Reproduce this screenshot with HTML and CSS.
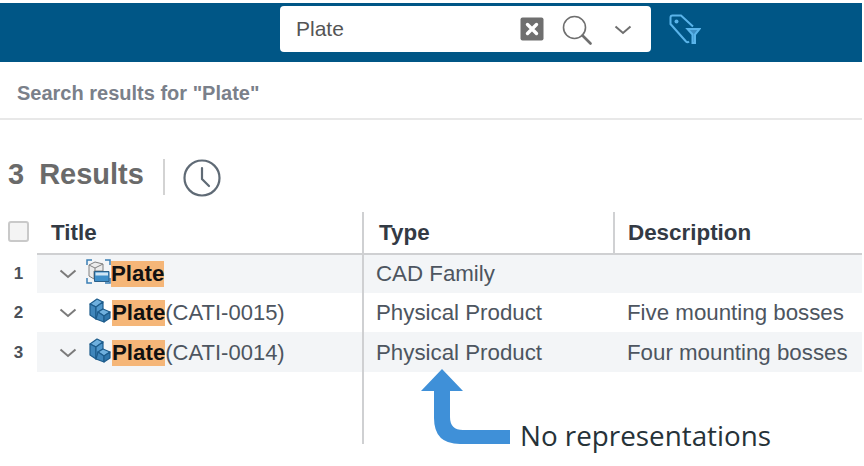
FILE: index.html
```html
<!DOCTYPE html>
<html lang="en">
<head>
<meta charset="utf-8">
<title>Search results</title>
<link rel="stylesheet" href="styles.css">
</head>
<body>
<div class="page">
  <header class="topbar">
    <div class="search">
      <span class="search-text">Plate</span>
      <svg class="ico-clear" width="24" height="24" viewBox="0 0 24 24"><rect x="0.5" y="0.5" width="23" height="23" rx="2" fill="#6f6f6f"/><path d="M7.500 7.500l9 9M16.500 7.500l-9 9" stroke="#fff" stroke-width="3.400" stroke-linecap="round"/></svg>
      <svg class="ico-search" width="30" height="30" viewBox="0 0 30 30" fill="none" stroke="#6f6f6f"><circle cx="12.500" cy="12.500" r="11" stroke-width="1.600"/><path d="M20.500 20.500l8 8" stroke-width="2.600" stroke-linecap="round"/></svg>
      <svg class="ico-caret" width="18" height="10" viewBox="0 0 18 10" fill="none" stroke="#6f6f6f" stroke-width="2"><path d="M1.500 1.500L9 8l7.500-6.500"/></svg>
    </div>
    <svg class="ico-tag" width="32" height="31" viewBox="0 0 32 31" fill="none" stroke="#5ab4ea" stroke-width="2"><path d="M24 12.500L12 1.500H3.500Q1.500 1.500 1.500 3.500V10L17 27.500Q18.500 29 20 27.500"/><circle cx="7.500" cy="7.500" r="2" fill="#5ab4ea" stroke="none"/><path d="M18.500 15H30.500L26 20.500V29H23.500V20.500Z" fill="#3e8fc4"/></svg>
  </header>
  <div class="subhead">Search results for "Plate"</div>
  <div class="summary">
    <span class="count">3</span>
    <span class="results">Results</span>
    <span class="sep"></span>
    <svg class="ico-clock" width="38" height="38" viewBox="0 0 38 38" fill="none" stroke="#5f6a75" stroke-width="2.200"><circle cx="19" cy="19" r="17.500"/><path d="M19 9v11l7 7" stroke-linecap="round"/></svg>
  </div>
  <div class="table">
    <div class="head">
      <div class="c-num"><span class="checkbox"></span></div>
      <div class="c-title">Title</div>
      <div class="c-type">Type</div>
      <div class="c-desc">Description</div>
    </div>
    <div class="row shade">
      <div class="c-num">1</div>
      <div class="c-title">
        <svg class="chev" width="18" height="10" viewBox="0 0 18 10" fill="none" stroke="#7b7b7b" stroke-width="2"><path d="M1.500 1.500L9 8l7.500-6.500"/></svg>
        <svg class="ico-fam" width="25" height="25" viewBox="0 0 25 25" fill="none"><path d="M1 6V1h5M19 1h5v5M24 19v5h-5M6 24H1v-5" stroke="#3b7fb5" stroke-width="1.500"/><path d="M3 6l6-3 8 2v7H8v8l-5-3z" fill="#ececec" stroke="#808080"/><path d="M3 6l6 3 8-4M9 9v3" stroke="#808080"/><path d="M8.500 12.500h14.500v10H8.500z" fill="#3f8fc9" stroke="#2a5f88"/><path d="M9.500 13.500h12.500v3H9.500z" fill="#cfe5f5"/></svg>
        <mark class="hit">Plate</mark>
      </div>
      <div class="c-type">CAD Family</div>
      <div class="c-desc"></div>
    </div>
    <div class="row">
      <div class="c-num">2</div>
      <div class="c-title">
        <svg class="chev" width="18" height="10" viewBox="0 0 18 10" fill="none" stroke="#7b7b7b" stroke-width="2"><path d="M1.500 1.500L9 8l7.500-6.500"/></svg>
        <svg class="ico-part" width="22" height="25" viewBox="0 0 22 25" stroke="#1d5c8c" stroke-width="1.200" stroke-linejoin="round"><path d="M1 6l7-5 6 3-7 5z" fill="#6fb0de"/><path d="M1 6l6 3v12l-6-4z" fill="#3f86bb"/><path d="M7 9l7-5v7l-5 3v7H7z" fill="#4f97cc"/><path d="M9 14l5-3 7 3-6 4z" fill="#6fb0de"/><path d="M7 21l2-7 6 4v6z" fill="#3f86bb"/><path d="M15 18l6-4v6l-6 4z" fill="#2f76ab"/></svg>
        <mark class="hit">Plate</mark><span>(CATI-0015)</span>
      </div>
      <div class="c-type">Physical Product</div>
      <div class="c-desc">Five mounting bosses</div>
    </div>
    <div class="row shade">
      <div class="c-num">3</div>
      <div class="c-title">
        <svg class="chev" width="18" height="10" viewBox="0 0 18 10" fill="none" stroke="#7b7b7b" stroke-width="2"><path d="M1.500 1.500L9 8l7.500-6.500"/></svg>
        <svg class="ico-part" width="22" height="25" viewBox="0 0 22 25" stroke="#1d5c8c" stroke-width="1.200" stroke-linejoin="round"><path d="M1 6l7-5 6 3-7 5z" fill="#6fb0de"/><path d="M1 6l6 3v12l-6-4z" fill="#3f86bb"/><path d="M7 9l7-5v7l-5 3v7H7z" fill="#4f97cc"/><path d="M9 14l5-3 7 3-6 4z" fill="#6fb0de"/><path d="M7 21l2-7 6 4v6z" fill="#3f86bb"/><path d="M15 18l6-4v6l-6 4z" fill="#2f76ab"/></svg>
        <mark class="hit">Plate</mark><span>(CATI-0014)</span>
      </div>
      <div class="c-type">Physical Product</div>
      <div class="c-desc">Four mounting bosses</div>
    </div>
    <div class="col-rule"></div>
  </div>
  <svg class="arrow" width="92" height="76" viewBox="0 0 92 76"><path d="M22 0L43 22H30V48Q30 61 43 61H90V75H40Q14 75 14 49V22H1z" fill="#3f90d8"/></svg>
  <div class="note">No representations</div>
</div>
</body>
</html>
```

FILE: styles.css
```css
* { box-sizing: border-box; }
html, body { margin: 0; padding: 0; background: #fff; }
.page {
  position: relative;
  width: 864px;
  height: 466px;
  overflow: hidden;
  padding: 3px 2px 0 0;
  font-family: "Liberation Sans", Arial, sans-serif;
  color: #4d5560;
}
.topbar {
  height: 59px;
  background: #005686;
  display: flex;
  align-items: flex-start;
  padding: 3px 0 0 280px;
}
.search {
  width: 371px;
  height: 46px;
  background: #fff;
  border-radius: 4px;
  display: flex;
  align-items: center;
  padding: 0 19px 0 16px;
}
.search-text { font-size: 21px; color: #555; flex: 1; }
.ico-clear { margin-right: 18px; }
.ico-search { margin-right: 22px; margin-top: 1px; }
.ico-caret { margin-top: 2px; }
.ico-tag { margin: 8px 0 0 18px; }
.subhead {
  height: 58px;
  padding: 20px 0 0 17px;
  font-size: 20px;
  font-weight: 700;
  color: #7a808a;
  border-bottom: 2px solid #e8e8e8;
  line-height: 23px;
}
.summary {
  height: 92px;
  display: flex;
  align-items: center;
  padding: 17px 0 0 8px;
}
.count, .results { font-size: 29px; font-weight: 700; color: #6a6a6a; }
.results { margin-left: 15px; }
.sep { width: 2px; height: 36px; background: #d3d3d3; margin: 4px 18px 0 19px; }
.ico-clock { margin-top: 6px; }
.table { position: relative; }
.head, .row { display: grid; grid-template-columns: 37px 326px 250px 1fr; }
.head { height: 41px; }
.head > div { font-size: 22.400px; font-weight: 700; color: #333a44; line-height: 41px; }
.head .c-title, .head .c-type, .head .c-desc { border-bottom: 2px solid #cfd0d2; }
.head .c-num { display: flex; align-items: flex-start; padding: 9px 0 0 8px; }
.checkbox {
  width: 21px;
  height: 21px;
  background: #f4f4f4;
  border: 2px solid #c9c9c9;
  border-radius: 3px;
}
.head .c-title { padding-left: 14px; }
.head .c-type { padding-left: 16px; }
.head .c-desc { padding-left: 13px; border-left: 2px solid #d0d1d3; }
.row { height: 39.500px; padding-top: 2px; font-size: 22.300px; color: #4d5560; align-items: center; }
.shade { background: linear-gradient(to right, transparent 37px, #f3f5f7 37px); }
.row .c-num { font-size: 17px; font-weight: 700; color: #4a5058; text-align: center; }
.row .c-title { display: flex; align-items: center; height: 100%; padding-left: 22px; font-size: 22px; }
.row .c-type { padding-left: 13px; }
.row .c-desc { padding-left: 14px; white-space: nowrap; }
.chev { margin-right: 10px; }
.ico-part { margin: -5px 1px 0 2px; }
.ico-fam { margin: -5px 0 0 -1px; }
.hit {
  background: #f5b678;
  color: #111;
  font-size: 22.300px;
  font-weight: 700;
  line-height: 26px;
}
.col-rule {
  position: absolute;
  left: 362px;
  top: 0;
  width: 2px;
  height: 232px;
  background: #cfd0d2;
}
.arrow { position: absolute; left: 420px; top: 369px; }
.note {
  position: absolute;
  left: 520px;
  top: 417px;
  font-family: "Open Sans", sans-serif;
  font-size: 27.800px;
  line-height: 36px;
  color: #263238;
  white-space: nowrap;
}
```
